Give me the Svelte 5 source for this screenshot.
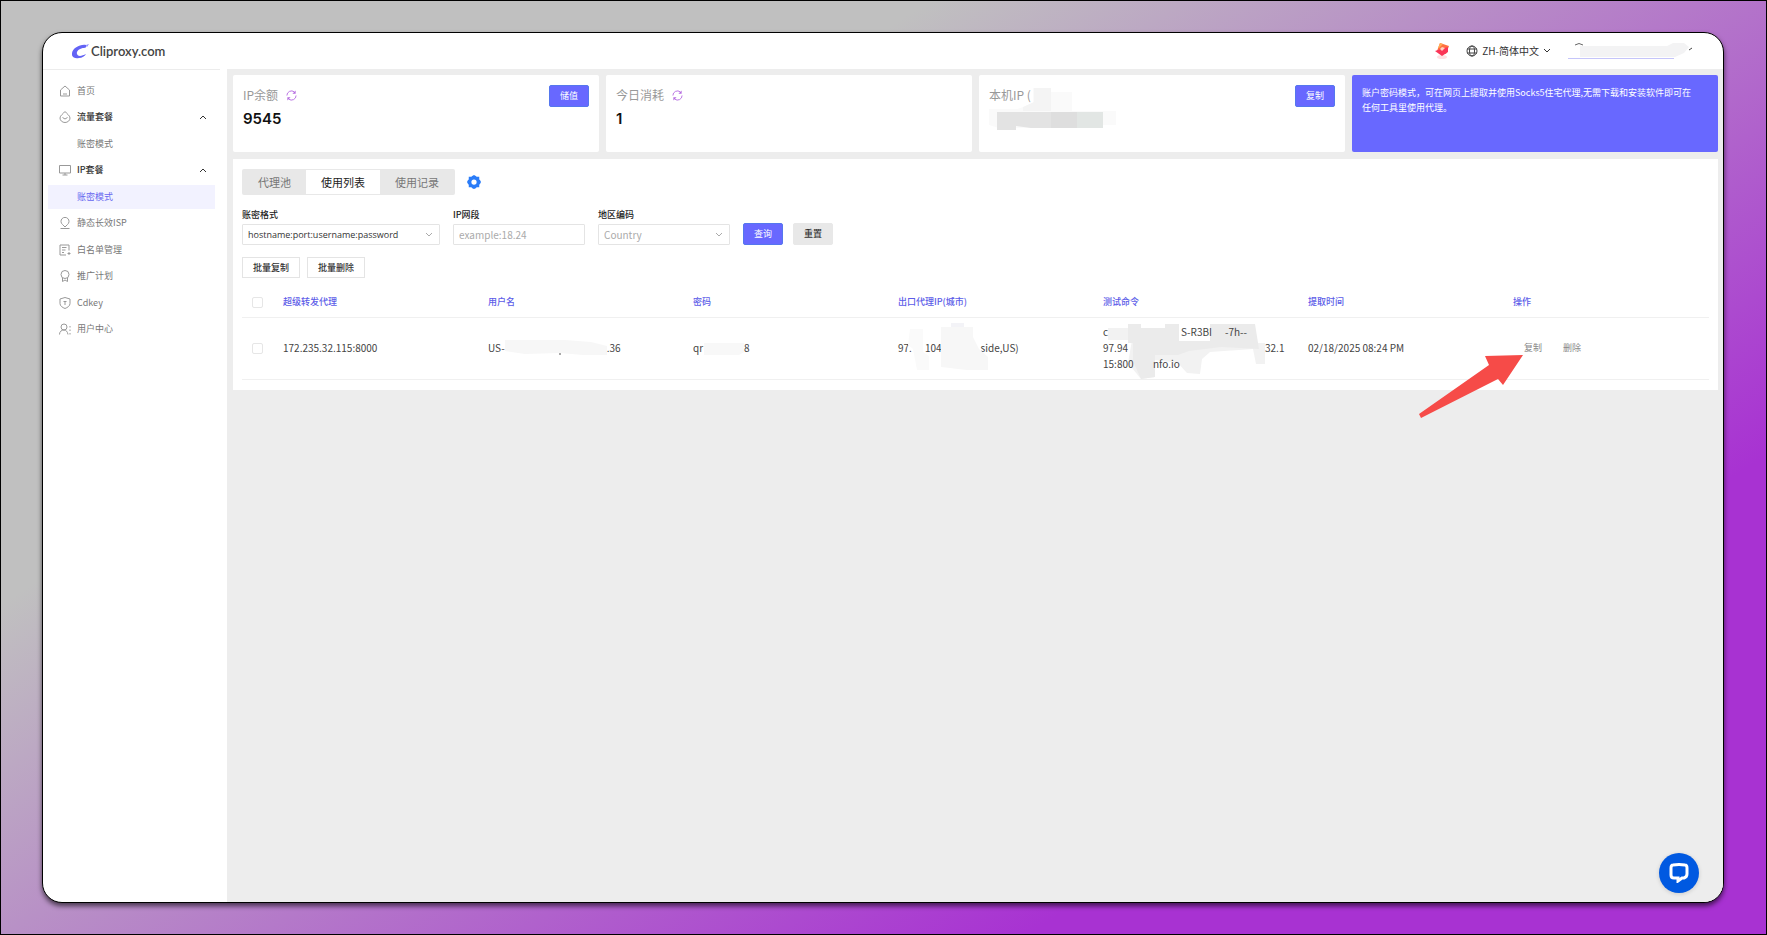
<script lang="ts">
	type MenuItem = {
		label: string;
		icon?: string;
		group?: boolean;
		active?: boolean;
	};

	const menu: MenuItem[] = [
		{ label: '首页', icon: 'home' },
		{ label: '流量套餐', icon: 'drop', group: true },
		{ label: '账密模式' },
		{ label: 'IP套餐', icon: 'monitor', group: true },
		{ label: '账密模式', active: true },
		{ label: '静态长效ISP', icon: 'pin' },
		{ label: '白名单管理', icon: 'list' },
		{ label: '推广计划', icon: 'medal' },
		{ label: 'Cdkey', icon: 'shield' },
		{ label: '用户中心', icon: 'user' }
	];

	const tabs = ['代理池', '使用列表', '使用记录'];
	const columns = ['超级转发代理', '用户名', '密码', '出口代理IP(城市)', '测试命令', '提取时间', '操作'];

	let activeTab = $state('使用列表');
	let selected = $state(false);
</script>

{#snippet menuIcon(name: string)}
	<svg class="menu-icon" viewBox="0 0 24 24" aria-hidden="true">
		{#if name === 'home'}
			<path d="M3 10 L12 2 L21 10 V22 H3 Z M8 18 H16" />
		{:else if name === 'drop'}
			<path d="M12 1 C9 5 2 9 2 14 A10 9 0 0 0 22 14 C22 9 15 5 12 1 Z M7 13 L12 16 L17 13" />
		{:else if name === 'monitor'}
			<path d="M1 3 H23 V18 H1 Z M12 18 V22 M7 22 H17" />
		{:else if name === 'pin'}
			<path d="M12 20 L7 15 A8 8 0 1 1 17 15 Z M3 23 H21" />
		{:else if name === 'list'}
			<path d="M20 13 V2 H2 V22 H14 M6 7 H15 M6 12 H13 M6 17 H10 M20 16 V22 M17 19 H23" />
		{:else if name === 'medal'}
			<path d="M12 1 A8 8 0 1 0 12 17 A8 8 0 1 0 12 1 M7 16 V23 L12 20 L17 23 V16" />
		{:else if name === 'shield'}
			<path d="M12 1 L22 4 V13 C22 18 17 21 12 23 C7 21 2 18 2 13 V4 Z M9 9 H15 M12 9 V16" />
		{:else if name === 'user'}
			<path d="M10 2 A6 6 0 1 0 10 14 A6 6 0 1 0 10 2 M1 23 C1 17 5 14 10 14 C14 14 17 17 18 23 M22 6 V9 M22 13 V16 M22 20 V23" />
		{/if}
	</svg>
{/snippet}

{#snippet chevron(up: boolean)}
	<svg class="chevron" class:up viewBox="0 0 8 8" aria-hidden="true">
		<path d="M1 2 L4 5 L7 2" />
	</svg>
{/snippet}

{#snippet refresh()}
	<button class="refresh" aria-label="刷新">
		<svg viewBox="0 0 12 12" aria-hidden="true">
			<path d="M1 6 A5 5 0 0 1 9 2 M11 6 A5 5 0 0 1 3 10" />
			<path class="tip" d="M10.500 .5 V4 H7 Z M1.500 11.500 V8 H5 Z" />
		</svg>
	</button>
{/snippet}

<div class="page">
	<div class="window">
		<header class="topbar">
			<a class="brand" href="/">
				<svg viewBox="0 0 17 15" aria-hidden="true">
					<path fill="#6363f5" d="M14 1 C8 0 1 4 0 9 C-1 13 3 15 7 14 C10 14 13 12 14 10 C10 12 6 13 5 10 C4 7 8 4 12 4 C14 4 15 2 14 1 Z" />
					<path fill="#8c8cff" d="M14 1 L17 0 L15 3 Z" />
				</svg>
				Cliproxy.com
			</a>
			<div class="tools">
				<svg class="gift" viewBox="0 0 16 18" aria-hidden="true">
					<ellipse cx="8" cy="15" rx="5" ry="2" fill="#ffe0e2" />
					<path fill="#ff7040" d="M6 1 L15 4 L12 12 L3 9 Z" />
					<path fill="#fa3557" d="M1 9 L7 7 L14 5 L14 10 L8 14 Z" />
					<path fill="#ffad55" d="M6 1 L9 2 L5 6 L4 6 Z" />
					<path fill="#ffd0c0" d="M8 5 L11 6 L8 9 L6 7 Z" />
				</svg>
				<button class="language">
					<svg class="globe" viewBox="0 0 12 12" aria-hidden="true">
						<circle cx="6" cy="6" r="5" />
						<ellipse cx="6" cy="6" rx="2.500" ry="5" />
						<path d="M1 4 H11 M1 8 H11" />
					</svg>
					ZH-简体中文
					{@render chevron(false)}
				</button>
				<svg class="account" viewBox="0 0 128 18" role="img" aria-label="账户">
					<path d="M8 3 Q12 0 16 3" fill="none" stroke="#666" />
					<path d="M1 16.500 H107" stroke="#c5c5fa" />
					<path fill="#f3f3f4" d="M13 4 H100 L106 1 H117 L122 5 L117 11 L108 15 H13 Z" />
					<path d="M122 8 L125 6" stroke="#444" />
				</svg>
			</div>
		</header>

		<div class="body">
			<nav class="sidebar">
				{#each menu as item}
					<a class="menu-item" class:group={item.group} class:active={item.active} href="/">
						<span class="icon-slot">
							{#if item.icon}{@render menuIcon(item.icon)}{/if}
						</span>
						<span>{item.label}</span>
						{#if item.group}
							{@render chevron(true)}
						{/if}
					</a>
				{/each}
			</nav>

			<main>
				<section class="cards">
					<div class="card">
						<div>
							<h2>IP余额 {@render refresh()}</h2>
							<strong>9545</strong>
						</div>
						<button class="primary">储值</button>
					</div>
					<div class="card">
						<div>
							<h2>今日消耗 {@render refresh()}</h2>
							<strong>1</strong>
						</div>
					</div>
					<div class="card">
						<div class="local-ip">
							<h2>本机IP (</h2>
							<svg class="mask" viewBox="0 0 132 44" aria-hidden="true">
								<path fill="#fafafa" d="M0 22 H28 L44 17 V1 H62 V5 H83 V24 H127 V38 H108 V41 H10 L0 38 Z" />
								<path fill="#f4f4f4" d="M34 20 L45 15 V1 H62 V24 H34 Z" />
								<path fill="#e3e3e3" d="M8 25 H114 V41 H42 L27 39 V43 H8 Z" />
								<path fill="#dedede" d="M62 25 H88 V41 H62 Z" />
								<path fill="#e2e6e4" d="M88 25 H114 V41 H88 Z" />
							</svg>
						</div>
						<button class="primary">复制</button>
					</div>
					<p class="card notice">
						账户密码模式，可在网页上提取并使用Socks5住宅代理,无需下载和安装软件即可在<br />任何工具里使用代理。
					</p>
				</section>

				<section class="panel">
					<div class="tab-row">
						<div class="tabs" role="tablist">
							{#each tabs as tab}
								<button
									role="tab"
									class:current={tab === activeTab}
									aria-selected={tab === activeTab}
									onclick={() => (activeTab = tab)}
								>{tab}</button>
							{/each}
						</div>
						<button class="gear" aria-label="设置">
							<svg viewBox="0 0 16 16" aria-hidden="true">
								<path
									fill-rule="evenodd"
									d="M6 1 L8 0 L10 1 L11 2 L14 2 L14 5 L15 6 L16 8 L15 10 L14 11 L14 14 L11 14 L10 15 L8 16 L6 15 L5 14 L2 14 L2 11 L1 10 L0 8 L1 6 L2 5 L2 2 L5 2 Z M8 5 A3 3 0 1 0 8 11 A3 3 0 1 0 8 5 Z"
								/>
							</svg>
						</button>
					</div>

					<form class="filters" onsubmit={(e) => e.preventDefault()}>
						<div class="field wide">
							<label for="format">账密格式</label>
							<div class="select">
								<select id="format">
									<option>hostname:port:username:password</option>
								</select>
								{@render chevron(false)}
							</div>
						</div>
						<div class="field">
							<label for="segment">IP网段</label>
							<input id="segment" type="text" placeholder="example:18.24" />
						</div>
						<div class="field">
							<label for="country">地区编码</label>
							<div class="select empty">
								<select id="country">
									<option>Country</option>
								</select>
								{@render chevron(false)}
							</div>
						</div>
						<div class="buttons">
							<button class="primary" type="submit">查询</button>
							<button class="reset" type="reset">重置</button>
						</div>
					</form>

					<div class="batch">
						<button>批量复制</button>
						<button>批量删除</button>
					</div>

					<table>
						<thead>
							<tr>
								<th class="check"><input type="checkbox" aria-label="全选" bind:checked={selected} /></th>
								{#each columns as column}
									<th>{column}</th>
								{/each}
							</tr>
						</thead>
						<tbody>
							<tr>
								<td class="check"><input type="checkbox" aria-label="选择" bind:checked={selected} /></td>
								<td>172.235.32.115:8000</td>
								<td>
									<div class="redacted">
										<span>US-</span>
										<svg width="102" height="18" viewBox="0 0 102 18" aria-hidden="true">
											<path fill="#f7f7f7" d="M0 1 H60 L86 3 L102 7 V16 H78 L55 14 L20 15 L0 12 Z" />
											<path d="M55 14 V16" stroke="#555" />
										</svg>
										<span>.36</span>
									</div>
								</td>
								<td>
									<div class="redacted">
										<span>qr</span>
										<svg width="41" height="18" viewBox="0 0 41 18" aria-hidden="true">
											<path fill="#f8f8f8" d="M1 4 H41 V13 L36 16 H1 Z" />
										</svg>
										<span>8</span>
									</div>
								</td>
								<td>
									<div class="redacted exit">
										<span>97.</span>
										<span>104</span>
										<span>side,US)</span>
										<svg class="smear" viewBox="0 0 90 50" aria-hidden="true">
											<path fill="#fafafa" d="M12 6 H25 V29 L31 33 V47 H19 L15 26 L10 22 Z" />
											<path fill="#f7f7f7" d="M43 4 H75 V14 L81 26 L90 34 V47 H69 L43 44 Z" />
											<path fill="#f3f3f7" d="M53 0 H66 V4 H53 Z" />
										</svg>
									</div>
								</td>
								<td>
									<div class="command">
										<svg class="smear" viewBox="0 0 170 56" aria-hidden="true">
											<path fill="#f2f2f2" d="M5 5 H75 V20 H162 L162 41 H153 L150 26 L107 29 L99 36 L97 51 L84 50 L75 40 L52 37 V54 L38 56 L25 40 L29 17 H5 Z" />
											<path fill="#ebebeb" d="M25 1 H38 V5 H62 V1 H76 V18 H107 V1 H152 L156 26 L118 24 L86 28 L75 32 H52 V54 L38 56 L30 38 V20 H25 Z" />
										</svg>
										<div><span>c</span><span class="code">S-R3BI</span><span class="tail">-7h--</span></div>
										<div><span>97.94</span><span class="end">32.1</span></div>
										<div><span>15:800</span><span class="host">nfo.io</span></div>
									</div>
								</td>
								<td>02/18/2025 08:24 PM</td>
								<td>
									<div class="actions">
										<a href="/">复制</a>
										<a href="/">删除</a>
										<svg class="pointer" viewBox="0 0 106 65" aria-hidden="true">
											<path d="M105 1 L67 2 L71 11 L1 60 L3 64 L80 25 L85 31 Z" />
										</svg>
									</div>
								</td>
							</tr>
						</tbody>
					</table>
				</section>
			</main>
		</div>

		<button class="chat" aria-label="在线客服">
			<svg viewBox="0 0 20 20" aria-hidden="true">
				<path d="M4 2 Q10 1 16 2 Q18 2 18 5 V11 Q18 14 15 15 H13 L9 18 V15 H5 Q2 15 2 12 V5 Q2 2 4 2 Z" />
			</svg>
		</button>
	</div>
</div>

<style>
	:global(body) {
		margin: 0;
	}

	.page {
		box-sizing: border-box;
		display: flex;
		min-height: 100vh;
		padding: 31px 42px 31px 41px;
		border: 1px solid #000;
		background: linear-gradient(147deg, #c0c0c0 29%, #a832d2 77%);
		font-family: 'Noto Sans CJK SC', sans-serif;
		font-size: 10px;
		line-height: 16px;
		color: #444;
	}

	.page * {
		box-sizing: border-box;
	}

	button,
	input,
	select {
		margin: 0;
		padding: 0;
		border: 0;
		font: inherit;
		color: inherit;
		background: none;
	}

	a {
		color: inherit;
		text-decoration: none;
	}

	svg {
		display: block;
		flex: none;
	}

	.window {
		position: relative;
		display: flex;
		flex-direction: column;
		flex: 1;
		min-width: 0;
		border: 1px solid #000;
		border-radius: 20px;
		overflow: hidden;
		background: #fff;
		box-shadow: 0 3px 5px rgb(0 0 0 / 60%);
	}

	.topbar {
		display: flex;
		align-items: center;
		justify-content: space-between;
		height: 36px;
		padding: 0 28px 0 29px;
	}

	.brand {
		display: flex;
		align-items: center;
		gap: 2px;
		font-family: Lato, sans-serif;
		font-size: 13px;
		font-weight: 600;
	}

	.brand svg {
		width: 17px;
		height: 15px;
	}

	.tools,
	.language {
		display: flex;
		align-items: center;
	}

	.tools {
		gap: 16px;
	}

	.language {
		gap: 4px;
		color: #333;
	}

	.gift {
		width: 16px;
		height: 18px;
	}

	.globe {
		width: 12px;
		height: 12px;
		fill: none;
		stroke: #444;
	}

	.account {
		width: 128px;
		height: 18px;
	}

	.chevron {
		width: 8px;
		height: 8px;
		fill: none;
		stroke: currentColor;
	}

	.chevron.up {
		transform: rotate(180deg);
		margin-left: auto;
	}

	.body {
		display: flex;
		flex: 1;
	}

	.sidebar {
		display: flex;
		flex-direction: column;
		justify-content: space-between;
		width: 177px;
		height: 272px;
		margin-right: 7px;
		padding: 9px 5px 0;
		border-top: 1px solid #ececec;
		color: #777;
		font-size: 9px;
	}

	.menu-item {
		display: flex;
		align-items: center;
		gap: 6px;
		height: 24px;
		padding: 0 8px 0 11px;
	}

	.menu-item.group {
		color: #333;
		font-weight: 500;
	}

	.menu-item.active {
		background: #f2f2ff;
		color: #6868f0;
	}

	.icon-slot {
		width: 12px;
	}

	.menu-icon {
		width: 12px;
		height: 12px;
		fill: none;
		stroke: #999;
		stroke-width: 2;
	}

	main {
		flex: 1;
		min-width: 0;
		padding: 6px 5px 6px 6px;
		background: #ededed;
	}

	.cards {
		display: grid;
		grid-template-columns: repeat(4, 1fr);
		gap: 7px;
		margin-bottom: 7px;
	}

	.card {
		display: flex;
		align-items: flex-start;
		justify-content: space-between;
		min-height: 77px;
		padding: 10px;
		border-radius: 2px;
		background: #fff;
	}

	h2 {
		display: flex;
		align-items: center;
		gap: 8px;
		margin: 0 0 4px;
		font-size: 12px;
		font-weight: 400;
		line-height: 20px;
		color: #999;
	}

	.card strong {
		display: block;
		font-family: Inter, sans-serif;
		font-size: 15px;
		font-weight: 600;
		line-height: 20px;
		color: #111;
	}

	.refresh svg {
		width: 11px;
		height: 11px;
		fill: none;
		stroke: #b56be0;
	}

	.refresh .tip {
		fill: #b56be0;
		stroke: none;
	}

	.local-ip {
		position: relative;
	}

	.mask {
		position: absolute;
		top: 2px;
		left: 0;
		width: 132px;
		height: 44px;
	}

	.primary,
	.reset {
		width: 40px;
		height: 22px;
		border: 1px solid #5577ee;
		border-radius: 2px;
		background: #6868ff;
		font-size: 9px;
		color: #fff;
	}

	.reset {
		border-color: #e8e8e8;
		background: #e8e8e8;
		font-weight: 500;
		color: #333;
	}

	.notice {
		display: block;
		margin: 0;
		background: #6868ff;
		font-size: 9px;
		line-height: 15px;
		color: #fff;
	}

	.panel {
		padding: 10px 9px;
		background: #fff;
	}

	.tab-row {
		display: flex;
		align-items: center;
		gap: 12px;
		margin-bottom: 12px;
	}

	.tabs {
		display: flex;
		padding: 1px;
		border-radius: 2px;
		background: #e8e8e8;
	}

	.tabs button {
		height: 24px;
		padding: 0 15px;
		font-size: 11px;
		color: #777;
	}

	.tabs .current {
		background: #fff;
		color: #222;
	}

	.gear svg {
		width: 14px;
		height: 14px;
		fill: #2a7cf8;
	}

	.filters {
		display: flex;
		align-items: flex-end;
		gap: 13px;
	}

	.field {
		width: 132px;
	}

	.field.wide {
		width: 198px;
	}

	.field label {
		display: block;
		margin-bottom: 1px;
		font-size: 9px;
		font-weight: 500;
		color: #222;
	}

	.field input,
	.field select {
		display: block;
		width: 100%;
		height: 21px;
		padding: 0 5px;
		border: 1px solid #e4e4e4;
		border-radius: 1px;
		appearance: none;
		color: #333;
	}

	.field.wide select {
		font-family: 'Open Sans', sans-serif;
		font-size: 9px;
	}

	.field input::placeholder,
	.field .empty select {
		color: #aaa;
		opacity: 1;
	}

	.select {
		display: grid;
		align-items: center;
	}

	.select > * {
		grid-area: 1 / 1;
	}

	.select .chevron {
		justify-self: end;
		margin-right: 7px;
		stroke: #aaa;
		pointer-events: none;
	}

	.buttons {
		display: flex;
		gap: 10px;
	}

	.batch {
		display: flex;
		gap: 7px;
		margin: 12px 0 10px;
	}

	.batch button {
		width: 58px;
		height: 21px;
		border: 1px solid #e4e4e4;
		font-size: 9px;
		font-weight: 500;
		color: #333;
	}

	table {
		width: 100%;
		table-layout: fixed;
		border-collapse: collapse;
	}

	th,
	td {
		padding: 0 9px;
		border-bottom: 1px solid #f0f0f0;
		text-align: left;
	}

	th {
		height: 29px;
		font-size: 9px;
		font-weight: 500;
		color: #5c5ce8;
	}

	td {
		height: 62px;
	}

	.check {
		width: 32px;
		padding: 0 0 0 10px;
	}

	.check input {
		display: block;
		width: 11px;
		height: 11px;
		border: 1px solid #e6e6e6;
		border-radius: 2px;
		appearance: none;
	}

	.check input:checked {
		background: #6868ff;
	}

	.redacted {
		position: relative;
		display: flex;
		align-items: center;
	}

	.exit {
		gap: 13px;
	}

	.exit span:nth-child(3) {
		margin-left: 26px;
	}

	.smear {
		position: absolute;
		top: -17px;
		left: 0;
		width: 90px;
		height: 50px;
	}

	.command {
		position: relative;
	}

	.command .smear {
		top: -1px;
		width: 170px;
		height: 56px;
	}

	/* the visible pieces of each line sit either side of the smear */
	.command > div {
		position: relative;
		display: grid;
		grid-template-columns: 50px 28px 44px 40px 20px;
	}

	.host {
		grid-column: 2;
	}

	.code {
		grid-column: 3;
	}

	.tail {
		grid-column: 4;
	}

	.end {
		grid-column: 5;
	}

	.actions {
		position: relative;
		display: flex;
		gap: 21px;
		padding-left: 11px;
		color: #888;
		font-size: 9px;
	}

	.pointer {
		position: absolute;
		top: 14px;
		right: calc(100% - 11px);
		width: 106px;
		height: 65px;
		fill: #f64b48;
	}

	.chat {
		position: absolute;
		right: 24px;
		bottom: 9px;
		display: grid;
		place-items: center;
		width: 40px;
		height: 40px;
		border-radius: 50%;
		background: #0059e1;
		box-shadow: 0 1px 4px rgb(0 0 0 / 15%);
	}

	.chat svg {
		width: 20px;
		height: 20px;
		fill: none;
		stroke: #fff;
		stroke-width: 3;
	}
</style>
